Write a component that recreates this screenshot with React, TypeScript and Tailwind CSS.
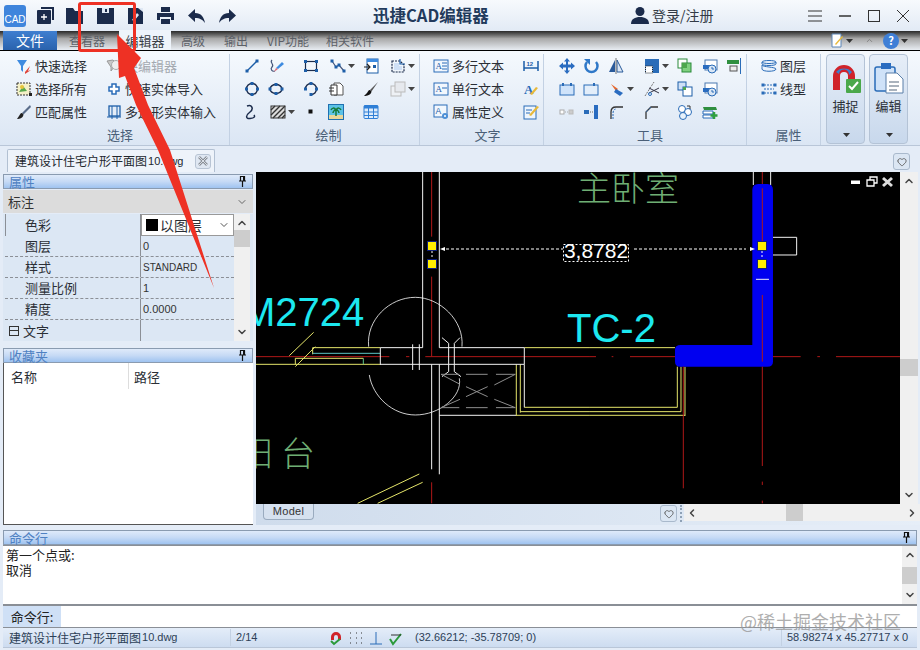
import type { ReactNode } from "react";
import { ChevronDown, ChevronLeft, ChevronRight, ChevronUp, Heart } from "lucide-react";

const navy = "#1b2b4b";
const blue = "#1d5ea8";

function Svg({ children, size = 16 }: { children: ReactNode; size?: number }) {
  return (
    <svg width={size} height={size} viewBox="0 0 16 16" fill="none" className="shrink-0">
      {children}
    </svg>
  );
}

function Caret({ color = "#444" }: { color?: string }) {
  return (
    <svg width="7" height="4" viewBox="0 0 7 4" className="ml-[2px] shrink-0">
      <path d="M0 0h7L3.5 4z" fill={color} />
    </svg>
  );
}

const node = (x: number, y: number, c = blue) => <rect x={x - 1.5} y={y - 1.5} width="3" height="3" fill={c} />;

const icons: Record<string, ReactNode> = {
  line: <><path d="M3 13 13 3" stroke={blue} strokeWidth="1.3" />{node(3, 13)}{node(13, 3)}</>,
  squiggle: <><path d="M4 2C1 5 7 6 4 9c-2 2 0 5 3 4" stroke="#44557a" strokeWidth="1.2" /><path d="M8 10l6-6 2 2-6 5z" fill="#3e8be0" /><path d="M6 14l2-4 2 1z" fill="#d86a7a" /></>,
  rect: <><rect x="2.5" y="3.5" width="11" height="9" stroke={navy} strokeWidth="1.2" />{node(2.5, 3.5)}{node(13.5, 3.5)}{node(2.5, 12.5)}{node(13.5, 12.5)}</>,
  poly: <><path d="M2 3l4 6 3-2 5 6" stroke="#44557a" strokeWidth="1.2" />{node(2, 3)}{node(6, 9)}{node(9, 7)}{node(14, 13)}</>,
  copyBox: <><rect x="4" y="1" width="11" height="14" fill="#fff" stroke={blue} /><rect x="4" y="1" width="11" height="3" fill="#3e8be0" /><path d="M1 9h6M4 6l3 3-3 3" stroke="#222" strokeWidth="1.2" /><path d="M10 7h3v3h-3z" fill={blue} /></>,
  hatchBox: <><path d="M2 3h8l4 4v7H2z" stroke={navy} strokeWidth="1.2" strokeDasharray="2 1" /><path d="M10 1v5h5" stroke={blue} strokeWidth="1.2" /><path d="M4 5h5v3h3v4H4z" fill="#cfe0f6" /></>,
  circle: <><circle cx="8" cy="8" r="5.5" stroke={navy} strokeWidth="1.4" />{node(8, 2.5)}{node(2.5, 8)}{node(13.5, 8)}{node(8, 13.5)}</>,
  ellipse: <><ellipse cx="8" cy="8" rx="6" ry="4.5" stroke={navy} strokeWidth="1.4" />{node(8, 3.5)}{node(2, 8)}{node(14, 8)}{node(8, 12.5)}</>,
  arc: <><path d="M2.5 8A5.5 5.5 0 0 1 13.5 8 5.5 5.5 0 0 1 8 13.5" stroke={navy} strokeWidth="1.4" />{node(8, 2.5)}{node(2.5, 8)}{node(13.5, 8)}{node(8, 13.5)}</>,
  docs: <><path d="M6 2h6l3 3v9H6z" fill="#fff" stroke="#555" /><path d="M3 4h6v10H3z" fill="#fff" stroke="#333" /><path d="M1 7h5M1 10h5" stroke="#333" /></>,
  brush: <><path d="M15 1 7 9l1.5 1.5z" fill="#555" /><path d="M7 9c-2 0-2 2-3 3l-3 3c3 0 7-1 7.500-4.500z" fill="#111" /></>,
  graySq: <><rect x="1" y="5" width="10" height="10" fill="#eef1f5" stroke="#bbb" /><rect x="5" y="1" width="10" height="10" fill="#e6e9ee" stroke="#bbb" /></>,
  s: <path d="M5 2c5-2 7 3 3 6s-5 7 0 6.500 5-2 4-3.500" stroke={navy} strokeWidth="1.5" />,
  hatch: <><rect x="1" y="2" width="14" height="12" fill="#ddd" stroke="#333" /><path d="M1 11 10 2M3 14 15 2M8 14l7-7M1 6l4-4M12 14l3-3" stroke="#333" strokeWidth="1.4" /></>,
  dot: <rect x="5.500" y="5.500" width="4" height="4" fill="#111" />,
  palm: <><rect x="0.500" y="0.500" width="15" height="15" fill="#5cc2e6" stroke="#2070b0" /><rect x="1" y="11" width="14" height="4" fill="#e8d69a" /><path d="M8 12V6M8 6C6 3 4 4 3 6M8 6c2-3 4-2 5 0M8 6C6 6 5 8 5 9M8 6c2 0 3 2 3 3" stroke="#157a3a" strokeWidth="1.500" /></>,
  table: <><rect x="1" y="1.500" width="14" height="13" rx="1" fill="#dcebfb" stroke="#2f7fd6" /><rect x="1" y="1.500" width="14" height="3" fill="#2f7fd6" /><path d="M5.500 4v10M10.500 4v10M1 8h14M1 11.500h14" stroke="#2f7fd6" /></>,
  textA: <><rect x="1" y="2" width="14" height="12" fill="#f2f7fd" stroke="#2a6cb8" /><text x="2.500" y="11" fontSize="9" fontFamily="Liberation Serif" fill="#1d5ea8">A</text><path d="M9 5h5M9 8h5M9 11h5" stroke="#2a6cb8" /></>,
  textA2: <><rect x="1" y="2" width="14" height="12" fill="#f2f7fd" stroke="#2a6cb8" /><text x="2.500" y="11" fontSize="9" fontFamily="Liberation Serif" fill="#1d5ea8">A</text><path d="M9 7h5" stroke="#2a6cb8" /></>,
  textAttr: <><rect x="1" y="1" width="13" height="12" fill="#f2f7fd" stroke="#2a6cb8" /><text x="2.500" y="10" fontSize="8.500" fontFamily="Liberation Sans" fill="#1d5ea8">A</text><circle cx="12" cy="12" r="3" fill="#4c8fd6" /><circle cx="12" cy="12" r="1" fill="#fff" /></>,
  dim: <><path d="M1 3v10M15 3v10" stroke={blue} strokeWidth="1.500" /><path d="M1 10h14" stroke={blue} strokeWidth="1.500" /><text x="3.500" y="8" fontSize="6" fill={blue} fontFamily="Liberation Sans" fontWeight="700">12</text></>,
  styleA: <><text x="1" y="13" fontSize="13" fontFamily="Liberation Serif" fontWeight="700" fill="#2a6cb8">A</text><path d="M9 14l6-7-2-1-6 7z" fill="#e8b93a" /></>,
  editBox: <><rect x="1" y="2" width="12" height="13" fill="#eef5fd" stroke="#2a6cb8" /><path d="M3 6h6M3 9h4" stroke="#2a6cb8" /><path d="M6 11 14 2l2 1-8 9z" fill="#e8b93a" /></>,
  move: <><path d="M8 0l3 3.500H9v3h3V4.500L16 8l-4 3.500V9.500H9v3h2L8 16l-3-3.500h2v-3H4v2L0 8l4-3.500v2h3v-3H5z" fill="#2a6cc0" /></>,
  rotate: <><path d="M4 4a6 6 0 1 0 9 0" stroke="#2f78c8" strokeWidth="2.500" fill="none" /><path d="M1 1h6v6z" fill="#2f78c8" /></>,
  mirror: <><path d="M7 2v12H1z" fill="#2a5a9a" /><path d="M9 2v12h6z" fill="#dce8f6" stroke="#2a5a9a" /><path d="M8 0v16" stroke="#777" /></>,
  fillSq: <><rect x="1" y="1" width="14" height="14" fill="#2a6cb8" /><rect x="1.500" y="8" width="7" height="7" fill="#fff" stroke="#222" strokeDasharray="1 1" /></>,
  greenSq: <><rect x="1" y="1" width="9" height="9" fill="#fff" stroke="#2a8a3a" /><rect x="5" y="5" width="9" height="9" fill="#7fcf7f" stroke="#2a8a3a" /><rect x="5" y="5" width="5" height="5" fill="#4da64d" /></>,
  greenSq2: <><rect x="1" y="1" width="8" height="8" fill="#cfe0f6" stroke="#1d5ea8" /><rect x="6" y="6" width="9" height="9" fill="#fff" stroke="#1d5ea8" /><rect x="6" y="6" width="3" height="3" fill="#4da64d" /></>,
  clockBox: <><rect x="3" y="2" width="12" height="10" fill="#fff" stroke="#4a79b0" /><rect x="1" y="7" width="7" height="4" fill="#2a6cc0" /><circle cx="10" cy="11" r="4" fill="#d9e6f5" stroke="#2a6cb8" /><path d="M10 9v2h2" stroke="#2a6cb8" /></>,
  greenBar: <><rect x="1" y="2" width="12" height="4" fill="#2f8f3f" /><rect x="4" y="8" width="7" height="5" fill="#eee" stroke="#555" /><path d="M14.500 0v16" stroke="#2a6cb8" /></>,
  cut1: <><rect x="1" y="4" width="14" height="10" fill="#cfe3fa" stroke="#2a6cb8" /><rect x="3" y="2" width="2" height="3" fill="#2a6cb8" /><rect x="11" y="2" width="2" height="3" fill="#2a6cb8" /></>,
  cut2: <><rect x="1" y="4" width="14" height="10" fill="#e3eefa" stroke="#2a6cb8" /><rect x="10" y="2" width="2" height="3" fill="#2a6cb8" /></>,
  pin: <><path d="M2 3l7 5-2 2z" fill="#e8662a" /><path d="M7 8l7 4-3 3-6-4z" fill="#2a6cc0" /></>,
  scissors: <><path d="M1 15 10 1" stroke="#777" strokeDasharray="2 1" /><path d="M5 7l10 5M5 12l10-5" stroke="#334" /><circle cx="6" cy="13" r="1.500" stroke="#2a6cb8" /></>,
  grayBoxes: <><rect x="1" y="6" width="4" height="4" fill="#fff" stroke="#aaa" /><path d="M6 8h3" stroke="#aaa" strokeDasharray="1 1" /><rect x="10" y="6" width="4" height="4" fill="#ccc" stroke="#bbb" /></>,
  ext: <><rect x="1" y="6" width="5" height="4" fill="#2a6cb8" /><path d="M7 8h3" stroke="#666" strokeDasharray="1 1" /><rect x="11" y="1" width="4" height="14" fill="#2a6cc0" /></>,
  fillet: <><path d="M3 15V8c0-3 2-5 5-5h7" stroke="#333" strokeWidth="1.300" /><path d="M5 15V9c0-2 1-4 3-4" stroke="#2a6cb8" strokeDasharray="2 1" /></>,
  chamfer: <><path d="M3 15V8l5-5h7" stroke="#333" strokeWidth="1.300" /><path d="M3 8 8 3" stroke="#2a6cb8" strokeDasharray="1 1" /></>,
  circles: <><circle cx="5" cy="5" r="3.500" fill="#fff" stroke="#2a6cb8" /><circle cx="11" cy="8" r="3.500" fill="#fff" stroke="#2a6cb8" /><circle cx="6" cy="12" r="3.500" fill="#e8f2fb" stroke="#2a6cb8" /><path d="M10 2l3 0v3" stroke="#333" /></>,
  layersAdd: <><path d="M1 3h13l1 3H2z" fill="#2f8f3f" /><path d="M1 7h10v3H1zM1 11h10v3H1z" fill="#fff" stroke="#2a6cb8" /><path d="M12 8v7M8.500 11.500h7" stroke="#2f9f3f" strokeWidth="2.500" /></>,
  layers: <><path d="M1 4c0-2 14-2 14 0v2c0 2-14 2-14 0zM1 7c0 2 14 2 14 4 0 3-14 3-14 0 0-2 0-3 0-4z" stroke="#2a6cb8" fill="#eaf2fb" /><path d="M1 4c0 2 14 2 14 0" stroke="#2a6cb8" /></>,
  linetype: <><path d="M3 4h10M3 8h10M3 12h10" stroke="#2a6cb8" strokeDasharray="2 1" /><rect x="0.500" y="2.500" width="3" height="3" fill="#2a6cb8" /><rect x="12.500" y="2.500" width="3" height="3" fill="#2a6cb8" /><rect x="0.500" y="10.500" width="3" height="3" fill="#2a6cb8" /><rect x="12.500" y="10.500" width="3" height="3" fill="#2a6cb8" /></>,
  funnel: <><path d="M1 2h10L7 8v6l-2-2V8z" fill="#3e8be0" /><path d="M9 14l5-6-2 5 3-1-6 4z" fill="#e0453a" /></>,
  selectAll: <><rect x="1" y="2" width="13" height="12" fill="#f4f0c8" stroke="#333" strokeDasharray="2 1" /><path d="M3 11 7 5l4 5z" fill="#58a94d" /><circle cx="6" cy="6" r="2" fill="#e6c53a" /><rect x="13" y="12" width="3" height="3" fill="#222" /></>,
  match: <><path d="M14 1 6 9l1.500 1.500L15 3z" fill="#5a6d8a" /><path d="M6 9c-2 0-2 2-3 3l-2 3c3 0 6-1 6.500-4.500z" fill="#222" /></>,
  block: <><path d="M1 3l6-1 3 3-2 4-3 4V9z" fill="#c8c8c8" stroke="#999" /><circle cx="10" cy="7" r="4.500" fill="#eee" stroke="#aaa" /></>,
  plus: <path d="M6 3h4v3h3v4h-3v3H6v-3H3V6h3z" fill="#fff" stroke="#2a6cb8" strokeWidth="1.500" />,
  polyIn: <><rect x="3" y="2" width="11" height="10" stroke="#1d5ea8" strokeWidth="1.300" /><path d="M1 13h14M6 2v13M11 2v13" stroke="#1d5ea8" /></>,
};

function Icon({ name, caret, className = "" }: { name: string; caret?: boolean; className?: string }) {
  return (
    <div className={`flex h-[23px] items-center justify-center ${className}`}>
      <Svg>{icons[name]}</Svg>
      {caret && <Caret />}
    </div>
  );
}

function Col({ ml, items }: { ml: string; items: ReactNode }) {
  return <div className={`flex w-6 flex-col ${ml}`}>{items}</div>;
}

function Group({ width, label, pad, children }: { width: string; label: string; pad: string; children: ReactNode }) {
  return (
    <div className={`flex shrink-0 flex-col border-r border-[#c3d1e3] ${width}`}>
      <div className="flex h-[70px]">{children}</div>
      <div className={`flex h-[21px] items-center justify-center text-[13px] text-[#4a5f78] ${pad}`}>{label}</div>
    </div>
  );
}

function Action({ icon, text, gray }: { icon: string; text: string; gray?: boolean }) {
  return (
    <div className={`flex h-[23px] items-center gap-[3px] whitespace-nowrap text-[13px] ${gray ? "text-[#a4a9b0]" : "text-[#2b2f36]"}`}>
      <Svg>{icons[icon]}</Svg>
      <span>{text}</span>
    </div>
  );
}

function PanelHead({ title }: { title: string }) {
  return (
    <div className="flex h-[15px] items-center justify-between border border-[#8a9bb0] bg-gradient-to-b from-[#dfeafa] via-[#c6daf5] to-[#9fc3f0] pl-[5px] pr-[5px] text-[13px] leading-none text-[#4f81c2]">
      <span>{title}</span>
      <PinIcon />
    </div>
  );
}

function PinIcon() {
  return (
    <svg width="9" height="11" viewBox="0 0 9 11" className="shrink-0">
      <path d="M1 5h7M2.500 0.500h4v4.500h-4zM4.500 5v6" stroke="#111" fill="none" strokeWidth="1.200" />
      <path d="M5 1h1.500v4H5z" fill="#111" />
    </svg>
  );
}

function PropRow({ label, value, last }: { label: ReactNode; value?: ReactNode; last?: boolean }) {
  return (
    <div className={`flex h-[21px] items-center ${last ? "" : "border-b border-dashed border-[#8b8f96]"}`}>
      <div className="flex h-full w-[136px] items-center border-r border-[#8b8f96] pl-[4px] text-[13px] text-[#2b2f36]">{label}</div>
      <div className="pl-[2px] font-['Liberation_Sans','Noto_Sans_CJK_SC',sans-serif] text-[11px] text-[#333]">{value}</div>
    </div>
  );
}

function VScroll({ thumbTop, thumbH, width }: { thumbTop: string; thumbH: string; width: string }) {
  return (
    <div className={`flex shrink-0 flex-col items-center bg-[#f0f0f0] ${width}`}>
      <ChevronUp size={12} strokeWidth={3} className="mt-[3px] shrink-0 text-[#444]" />
      <div className={`w-full shrink-0 bg-[#cdcdcd] ${thumbTop} ${thumbH}`} />
      <div className="flex-1" />
      <ChevronDown size={12} strokeWidth={3} className="mb-[3px] shrink-0 text-[#444]" />
    </div>
  );
}

function HeartBtn() {
  return (
    <div className="flex h-[17px] w-[17px] shrink-0 items-center justify-center rounded-[3px] border border-[#a9b9cc] bg-[#dbe6f3]">
      <Heart size={10} className="text-[#555]" />
    </div>
  );
}

function Drawing() {
  return (
    <svg width="644" height="332" viewBox="0 0 644 332" className="block shrink-0 bg-black">
      {/* left half, in coordinates of the 3x crop */}
      <g transform="translate(0,-2) scale(0.3333)" fill="none" strokeWidth="3">
        <path d="M527 5V200M527 320V560M527 937V1000M0 560H400M450 560H460M508 560H1002" stroke="#b01818" />
        <path d="M0 583H373M118 583V565H322M170 553V533H373M805 533H1002M805 712H1002M793 725H1002M781 736H1002M781 583V738M793 583V728M100 557 173 487M118 590 178 530M305 1000 490 912M365 1000 500 937" stroke="#e6e66a" />
        <path d="M170 550H373" stroke="#5cc6c6" />
        <path d="M322 565V583" stroke="#5fc48a" />
        <path d="M500 5V533H373V585M550 5V533H805V583M373 583H805M470 523V600M490 523V600M527 583V898M550 583V913M550 736H780M805 583V712M558 503 578 520V605L558 620M612 503 595 520V605L615 620" stroke="#f4f4f4" />
        <path d="M338 530C330 450 400 382 478 382C550 382 625 450 618 530M340 615C350 680 410 735 478 735C550 735 620 680 610 625" stroke="#f4f4f4" strokeWidth="2.500" />
        <path d="M555 613H610M630 613H695M720 613H778M555 713H610M630 713H695M720 713H778M555 613 612 643M778 613 715 645M630 680 695 650M630 650 695 680M555 713 612 688M778 713 715 688" stroke="#8e8e8e" />
      </g>
      {/* right half, in coordinates of its 3x crop */}
      <g transform="translate(334,-2) scale(0.3333)" fill="none" strokeWidth="3">
        <path d="M490 5V45M542 5V45" stroke="#f4f4f4" />
        <path d="M549 202H620V255H549" stroke="#f4f4f4" />
        <path d="M262 590V712M273 590V725M285 590V738M0 712H262M0 725H273M0 736H285" stroke="#e6e66a" />
        <path d="M0 533H255" stroke="#e6e66a" />
        <path d="M487 60Q487 42 505 42H532Q549 42 549 60V575Q549 590 532 590H272Q255 590 255 575V540Q255 525 272 525H487Z" fill="#0000f0" />
        <path d="M517 5V42M517 55V215M517 375V575M517 590V888M517 935V945M517 992V1000M0 560H18M65 560H70M120 560H255M549 560H632M682 560H690M738 560H930M280 590V955" stroke="#b01818" />
        <path d="M498 328H537" stroke="#f4f4f4" />
      </g>
      <text x="-14" y="154" fontSize="40" fontFamily="Liberation Sans" fill="#1ce8f0">M2724</text>
      <text x="311" y="170" fontSize="40" fontFamily="Liberation Sans" fill="#1ce8f0">TC-2</text>
      <text x="321" y="29" fontSize="34" fontFamily="Noto Sans CJK SC" fontWeight="300" fill="#6fae74">主卧室</text>
      <text x="-17" y="294" fontSize="34" fontFamily="Noto Sans CJK SC" fontWeight="300" fill="#6fae74">阳</text>
      <text x="25" y="294" fontSize="34" fontFamily="Noto Sans CJK SC" fontWeight="300" fill="#6fae74">台</text>
      {/* dimension */}
      <path d="M190 77H307M378 77H490" stroke="#fff" strokeDasharray="3 2" />
      <path d="M184 77l5-2v4zM499 77l-5-2v4z" fill="#fff" />
      <rect x="307.500" y="72.500" width="65" height="17" fill="none" stroke="#fff" strokeDasharray="2 2" />
      <text x="340" y="86" fontSize="21" textAnchor="middle" fontFamily="Liberation Sans" fill="#fff">3,8782</text>
      {[[176, 74], [176, 92], [506, 74], [506, 92]].map(([x, y]) => (
        <rect key={`${x}-${y}`} x={x - 4.5} y={y - 4.5} width="9" height="9" fill="#ffee00" stroke="#10207a" />
      ))}
      <path d="M176 79V87M506 79V87" stroke="#fff" strokeDasharray="2 2" />
      {/* child window buttons */}
      <path d="M595 8.500H604V12H595z" fill="#fff" />
      <path d="M611 8H618V14H611zM614 8V5H621V11H618" fill="none" stroke="#fff" strokeWidth="1.300" />
      <path d="M627 6 636 14M636 6 627 14" stroke="#ddd" strokeWidth="3" />
    </svg>
  );
}

export default function App() {
  return (
    <div className="relative flex h-[650px] w-[920px] flex-col overflow-hidden bg-[#e4ecf7] font-['Noto_Sans_CJK_SC','Liberation_Sans',sans-serif]">
      {/* title bar */}
      <div className="flex h-[31px] shrink-0 items-center bg-gradient-to-b from-[#f7fafd] to-[#e2eaf5]">
        <div className="ml-[4px] flex h-[22px] w-[22px] flex-col items-center justify-end rounded-[3px] bg-[#3f85dc] pb-[2px] font-['Liberation_Sans',sans-serif] text-[10px] leading-none text-white">
          CAD
        </div>
        <div className="ml-[11px] flex items-center gap-[12px]">
          <svg width="17" height="17" viewBox="0 0 17 17">
            <path d="M4 0h13v13h-2V2H4z" fill={navy} />
            <rect x="0" y="3" width="14" height="14" rx="1" fill={navy} />
            <path d="M7 7v6M4 10h6" stroke="#fff" strokeWidth="1.300" />
          </svg>
          <svg width="17" height="17" viewBox="0 0 17 17">
            <path d="M0 1h7l2 3h8v13H0z" fill={navy} />
          </svg>
        </div>
        <div className="ml-[14px] flex items-center gap-[14px]">
          <svg width="17" height="17" viewBox="0 0 17 17">
            <path d="M0 1h17v16H0z" fill={navy} />
            <rect x="5" y="1" width="7" height="5" fill="#dfe8f4" />
            <rect x="8" y="2" width="2" height="3" fill={navy} />
          </svg>
          <svg width="15" height="17" viewBox="0 0 15 17">
            <path d="M0 1h15v16H0z" fill={navy} />
            <path d="M4 13l5-7 2 2-5 6zM10 1h5v4z" fill="#dfe8f4" />
          </svg>
          <svg width="17" height="17" viewBox="0 0 17 17">
            <path d="M4 0h9v5H4zM0 6h17v7h-3v-3H3v3H0zM4 12h9v5H4z" fill={navy} />
          </svg>
          <svg width="17" height="14" viewBox="0 0 17 14">
            <path d="M7 0v4c6 0 9 4 10 10-2-3-5-5-10-5v4L0 6.500z" fill={navy} />
          </svg>
          <svg width="17" height="14" viewBox="0 0 17 14">
            <path d="M10 0v4C4 4 1 8 0 14c2-3 5-5 10-5v4l7-6.500z" fill={navy} />
          </svg>
        </div>
        <div className="ml-[137px] w-[130px] whitespace-nowrap text-[16.5px] font-bold text-[#223a5c]">迅捷CAD编辑器</div>
        <div className="ml-[128px] flex items-center gap-[3px] text-[14px] text-[#333b47]">
          <svg width="18" height="17" viewBox="0 0 18 17">
            <circle cx="9" cy="4.500" r="4.500" fill={navy} />
            <path d="M0 17c0-5 4-7 9-7s9 2 9 7z" fill={navy} />
          </svg>
          登录/注册
        </div>
        <div className="ml-[94px] flex items-center gap-[17px] text-[#333]">
          <svg width="14" height="12" viewBox="0 0 14 12"><path d="M0 1h14M0 6h14M0 11h14" stroke="#333" /></svg>
          <svg width="12" height="12" viewBox="0 0 12 12"><path d="M0 6h12" stroke="#333" strokeWidth="1.500" /></svg>
          <svg width="12" height="12" viewBox="0 0 12 12"><rect x="0.500" y="0.500" width="11" height="11" fill="none" stroke="#333" /></svg>
          <svg width="12" height="12" viewBox="0 0 12 12"><path d="M0 0l12 12M12 0 0 12" stroke="#333" /></svg>
        </div>
      </div>

      {/* ribbon tabs */}
      <div className="flex h-[20px] shrink-0 items-end whitespace-nowrap border-b border-black bg-gradient-to-b from-[#2a2a2a] via-[#a8a8a8] via-40% to-[#e8edf3] pl-[3px] text-[12px] leading-[19px] text-[#5c6067]">
        <div className="flex h-[19px] w-[54px] items-center justify-center bg-gradient-to-b from-[#3f7fd0] to-[#2a62ad] text-[14px] text-white">文件</div>
        <div className="ml-[12px] w-[36px]">查看器</div>
        <div className="ml-[14px] flex h-[20px] w-[52px] items-center justify-center bg-[#eef4fb] text-[13px] text-[#3a3f47]">编辑器</div>
        <div className="ml-[10px] w-[24px]">高级</div>
        <div className="ml-[19px] w-[24px]">输出</div>
        <div className="ml-[19px] w-[40px]">VIP功能</div>
        <div className="ml-[19px] w-[48px]">相关软件</div>
        <div className="ml-auto mr-[12px] flex h-[19px] items-center">
          <svg width="13" height="15" viewBox="0 0 13 15">
            <path d="M1 1h9v13H1z" fill="#fff" stroke="#5d86b8" />
            <path d="M4 11l7-8 1 1-7 8z" fill="#e8b93a" />
          </svg>
          <Caret color="#333" />
          <ChevronUp size={9} className="ml-[12px] text-[#777]" />
          <div className="ml-[9px] flex h-[16px] w-[16px] items-center justify-center rounded-full bg-[#3f7fd6] text-[11px] font-bold leading-none text-white">?</div>
          <Caret color="#333" />
        </div>
      </div>

      {/* ribbon */}
      <div className="flex h-[95px] shrink-0 border-b border-[#b9c6d8] bg-gradient-to-b from-[#f5f9fd] to-[#dbe6f4] pl-[3px] pt-[3px]">
        <Group width="w-[227px]" pad="pl-[8px]" label="选择">
          <div className="ml-[13px] flex w-[90px] flex-col">
            <Action icon="funnel" text="快速选择" />
            <Action icon="selectAll" text="选择所有" />
            <Action icon="match" text="匹配属性" />
          </div>
          <div className="flex flex-col">
            <Action icon="block" text="块编辑器" gray />
            <Action icon="plus" text="快速实体导入" />
            <Action icon="polyIn" text="多边形实体输入" />
          </div>
        </Group>
        <Group width="w-[190px]" pad="pl-[8px]" label="绘制">
          <Col ml="ml-[10px]" items={<><Icon name="line" /><Icon name="circle" /><Icon name="s" className="-translate-x-[2px]" /></>} />
          <Col ml="" items={<><Icon name="squiggle" /><Icon name="ellipse" /><Icon name="hatch" caret className="translate-x-[6px]" /></>} />
          <Col ml="ml-[11px]" items={<><Icon name="rect" /><Icon name="arc" /><Icon name="dot" /></>} />
          <Col ml="ml-[5px]" items={<><Icon name="poly" caret className="translate-x-[2px]" /><Icon name="docs" className="-translate-x-[4px]" /><Icon name="palm" className="-translate-x-[4px]" /></>} />
          <Col ml="ml-[7px]" items={<><Icon name="copyBox" /><Icon name="brush" /><Icon name="table" /></>} />
          <Col ml="ml-[7px]" items={<><Icon name="hatchBox" caret /><Icon name="graySq" caret /></>} />
        </Group>
        <Group width="w-[124px]" pad="pl-[12px]" label="文字">
          <div className="ml-[13px] flex w-[90px] flex-col">
            <Action icon="textA" text="多行文本" />
            <Action icon="textA2" text="单行文本" />
            <Action icon="textAttr" text="属性定义" />
          </div>
          <div className="flex flex-col">
            <Icon name="dim" />
            <Icon name="styleA" />
            <Icon name="editBox" />
          </div>
        </Group>
        <Group width="w-[203px]" pad="pl-[10px]" label="工具">
          <Col ml="ml-[11px]" items={<><Icon name="move" /><Icon name="cut1" /><Icon name="grayBoxes" /></>} />
          <Col ml="" items={<><Icon name="rotate" /><Icon name="cut2" /><Icon name="ext" /></>} />
          <Col ml="ml-[1px]" items={<><Icon name="mirror" /><Icon name="pin" caret className="translate-x-[6px]" /><Icon name="fillet" /></>} />
          <Col ml="ml-[17px]" items={<><Icon name="fillSq" caret /><Icon name="scissors" caret /><Icon name="chamfer" className="-translate-x-[6px]" /></>} />
          <Col ml="ml-[5px]" items={<><Icon name="greenSq" /><Icon name="greenSq2" /><Icon name="circles" /></>} />
          <Col ml="ml-[1px]" items={<><Icon name="clockBox" /><Icon name="clockBox" /><Icon name="layersAdd" /></>} />
          <Col ml="" items={<Icon name="greenBar" />} />
        </Group>
        <Group width="w-[74px]" pad="pl-[10px]" label="属性">
          <div className="ml-[14px] flex flex-col">
            <Action icon="layers" text="图层" />
            <Action icon="linetype" text="线型" />
          </div>
        </Group>
        <div className="ml-[5px] flex h-[90px] w-[39px] shrink-0 flex-col items-center rounded-[4px] border border-[#b4c3d6] bg-gradient-to-b from-[#e6eef8] to-[#c8d8ec] pt-[7px] text-[13px] text-[#2b2f36]">
          <svg width="32" height="32" viewBox="0 0 32 32" className="shrink-0">
            <path d="M3 28V14a11 11 0 0 1 22 0v6h-7v-6a4 4 0 0 0-8 0v14z" fill="#d0232a" />
            <path d="M6 10a11 11 0 0 1 16 0l-3 3a5 5 0 0 0-10-1z" fill="#3a7fd0" />
            <rect x="16" y="17" width="15" height="14" rx="1" fill="#4aa84a" />
            <path d="M19 24l3 3 6-7" stroke="#fff" strokeWidth="2" fill="none" />
          </svg>
          <span className="mt-[2px]">捕捉</span>
          <div className="flex-1" />
          <div className="mb-[6px]"><Caret color="#333" /></div>
        </div>
        <div className="ml-[4px] flex h-[90px] w-[39px] shrink-0 flex-col items-center rounded-[4px] border border-[#b4c3d6] bg-gradient-to-b from-[#e6eef8] to-[#c8d8ec] pt-[7px] text-[13px] text-[#2b2f36]">
          <svg width="30" height="32" viewBox="0 0 30 32" className="shrink-0">
            <rect x="1" y="5" width="20" height="24" rx="2" fill="#cfe2f8" stroke="#2a6cb8" strokeWidth="1.500" />
            <rect x="7" y="1" width="10" height="6" fill="#2a6cc0" />
            <path d="M12 11h11l6 6v14H12z" fill="#fff" stroke="#5a7fa8" />
            <path d="M15 20h10M15 24h10M15 28h8" stroke="#8f9aa8" strokeWidth="1.500" />
          </svg>
          <span className="mt-[2px]">编辑</span>
          <div className="flex-1" />
          <div className="mb-[6px]"><Caret color="#333" /></div>
        </div>
      </div>

      {/* document tabs */}
      <div className="flex h-[26px] shrink-0 items-end pl-[7px]">
        <div className="flex h-[23px] w-[208px] items-center rounded-t-[2px] border border-b-0 border-[#b2c0d2] bg-[#eef3fa] pl-[7px] text-[12px] text-[#23272e]">
          建筑设计住宅户形平面图
          <span className="ml-[1px] font-['Liberation_Sans',sans-serif] text-[11px]">10.dwg</span>
          <div className="ml-[11px] flex h-[15px] w-[16px] items-center justify-center rounded-[3px] border border-[#b8c4d4] bg-[#dfe7f2]">
            <svg width="10" height="10" viewBox="0 0 10 10">
              <path d="M1 1l8 8M9 1 1 9" stroke="#8a8f96" strokeWidth="2.500" />
              <path d="M1 1l8 8M9 1 1 9" stroke="#eef3fa" strokeWidth="0.800" />
            </svg>
          </div>
        </div>
        <div className="ml-auto mb-[2px] mr-[10px]"><HeartBtn /></div>
      </div>

      {/* main area */}
      <div className="flex h-[353px] shrink-0 pl-[3px]">
        <div className="flex w-[250px] shrink-0 flex-col">
          <div className="mt-[2px]"><PanelHead title="属性" /></div>
          <div className="mt-[1px] flex h-[23px] items-center justify-between bg-[#dcdcdc] pl-[5px] pr-[5px] text-[13px] text-[#333]">
            标注
            <ChevronDown size={12} className="text-[#666]" />
          </div>
          <div className="mt-[1px] flex h-[127px] bg-[#dce7f4]">
            <div className="w-[231px] pl-[2px]">
              <div className="flex h-[22px] items-center border-l border-[#8b8f96]">
                <div className="flex h-full w-[135px] items-center border-r border-[#8b8f96] pl-[19px] text-[13px] text-[#2b2f36]">色彩</div>
                <div className="flex h-[22px] flex-1 items-center justify-between border border-[#999] bg-white pl-[4px] pr-[3px] text-[14px] text-[#2b2f36]">
                  <span className="flex items-center gap-[2px]"><span className="h-[12px] w-[12px] bg-black" />以图层</span>
                  <ChevronDown size={12} className="text-[#555]" />
                </div>
              </div>
              <PropRow label={<span className="pl-[16px]">图层</span>} value="0" />
              <PropRow label={<span className="pl-[16px]">样式</span>} value={<span className="text-[10px]">STANDARD</span>} />
              <PropRow label={<span className="pl-[16px]">测量比例</span>} value="1" />
              <PropRow label={<span className="pl-[16px]">精度</span>} value="0.0000" />
              <PropRow last label={<span className="flex items-center gap-[4px]"><span className="flex h-[10px] w-[10px] items-center border border-[#333]"><span className="h-px w-full bg-[#333]" /></span>文字</span>} />
            </div>
            <VScroll width="w-[16px]" thumbTop="mt-[1px]" thumbH="h-[17px]" />
          </div>
          <div className="mt-[7px]"><PanelHead title="收藏夹" /></div>
          <div className="flex flex-1 border-b border-l border-[#555] bg-white text-[13px] text-[#2b2f36]">
            <div className="h-[26px] w-[125px] border-r border-[#ddd] pl-[7px] pt-[4px]">名称</div>
            <div className="pl-[5px] pt-[4px]">路径</div>
          </div>
        </div>

        <div className="ml-[3px] flex min-w-0 flex-1 flex-col">
          <div className="flex">
            <Drawing />
            <VScroll width="w-[18px]" thumbTop="mt-[172px]" thumbH="h-[17px]" />
          </div>
          <div className="flex h-[21px] bg-gradient-to-r from-[#cfdcec] to-[#e6eef8]">
            <div className="ml-[7px] flex h-[16px] w-[51px] items-center justify-center rounded-b-[4px] border-x border-b border-[#9aabbf] bg-[#d6e1ef] font-['Liberation_Sans',sans-serif] text-[11px] tracking-wide text-[#333]">
              Model
            </div>
            <div className="ml-[346px] mt-px"><HeartBtn /></div>
            <div className="ml-[3px] mt-px h-[17px] border-l-2 border-dotted border-[#8fa1b6]" />
            <div className="ml-[2px] flex h-[17px] flex-1 items-center justify-between bg-[#f0f0f0] pl-[2px] pr-[2px]">
              <ChevronLeft size={12} strokeWidth={3} className="text-[#444]" />
              <div className="ml-[88px] h-full w-[17px] bg-[#cdcdcd]" />
              <div className="flex-1" />
              <ChevronRight size={12} strokeWidth={3} className="text-[#444]" />
            </div>
          </div>
        </div>
      </div>

      {/* command line */}
      <div className="mx-[3px] mt-[5px] shrink-0"><PanelHead title="命令行" /></div>
      <div className="mx-[3px] flex h-[61px] shrink-0 border-b-2 border-t border-[#8a8f96] bg-white text-[13px] leading-[15px] text-[#222]">
        <div className="flex-1 pl-[3px] pt-[1px]">
          <div>第一个点或:</div>
          <div>取消</div>
        </div>
        <VScroll width="w-[15px]" thumbTop="mt-[6px]" thumbH="h-[17px]" />
      </div>
      <div className="mx-[3px] flex h-[22px] shrink-0 border-b border-[#8a8f96] bg-white">
        <div className="flex w-[58px] items-center justify-center bg-[#cfe0f6] text-[13px] text-[#222]">命令行:</div>
      </div>
      <div className="mx-[3px] flex h-[20px] shrink-0 items-center border-b border-[#b9c6d8] bg-gradient-to-b from-[#e4edf9] to-[#cddcf0] text-[12px] text-[#2d3f57]">
        <div className="flex w-[227px] items-center pl-[6px]">
          建筑设计住宅户形平面图
          <span className="ml-[1px] font-['Liberation_Sans',sans-serif] text-[11px]">10.dwg</span>
        </div>
        <div className="w-[98px] border-l border-[#c3d1e3] pl-[5px] font-['Liberation_Sans',sans-serif] text-[11px]">2/14</div>
        <div className="flex w-[87px] items-center gap-[4px]">
          <Svg><path d="M3 10V7a5 5 0 0 1 10 0v3h-3V7a2 2 0 0 0-4 0v3z" fill="#d0232a" /><path d="M3 11l3 3 6-5" stroke="#2a9a3a" strokeWidth="2" /></Svg>
          <Svg><path d="M2 3h1M8 3h1M13 3h1M2 8h1M8 8h1M13 8h1M2 13h1M8 13h1M13 13h1" stroke="#333" /></Svg>
          <Svg><path d="M2 14h12M8 2v12" stroke="#2a6cb8" /></Svg>
          <Svg><path d="M2 9l3 5 8-10" stroke="#2a9a3a" strokeWidth="2" /><path d="M3 5h10" stroke="#333" /></Svg>
        </div>
        <div className="font-['Liberation_Sans',sans-serif] text-[11px]">(32.66212; -35.78709; 0)</div>
        <div className="ml-auto w-[136px] border-l border-[#c3d1e3] pl-[5px] font-['Liberation_Sans',sans-serif] text-[11px]">58.98274 x 45.27717 x 0</div>
      </div>

      {/* watermark */}
      <div className="absolute left-[740px] top-[607px] whitespace-nowrap text-[18px] leading-[28px] text-[#9a9a9a] opacity-80">@稀土掘金技术社区</div>

      {/* red annotation */}
      <div className="absolute left-[78px] top-[2px] h-[50px] w-[58px] rounded-[3px] border-[3px] border-[#ee3124]" />
      <svg width="230" height="300" viewBox="0 0 230 300" className="absolute left-0 top-0">
        <path d="M117 34 141 58 134 68 148 105 170 150 214 288 158 150 136 105 125 76 119 78Z" fill="#ee3124" />
      </svg>
    </div>
  );
}
